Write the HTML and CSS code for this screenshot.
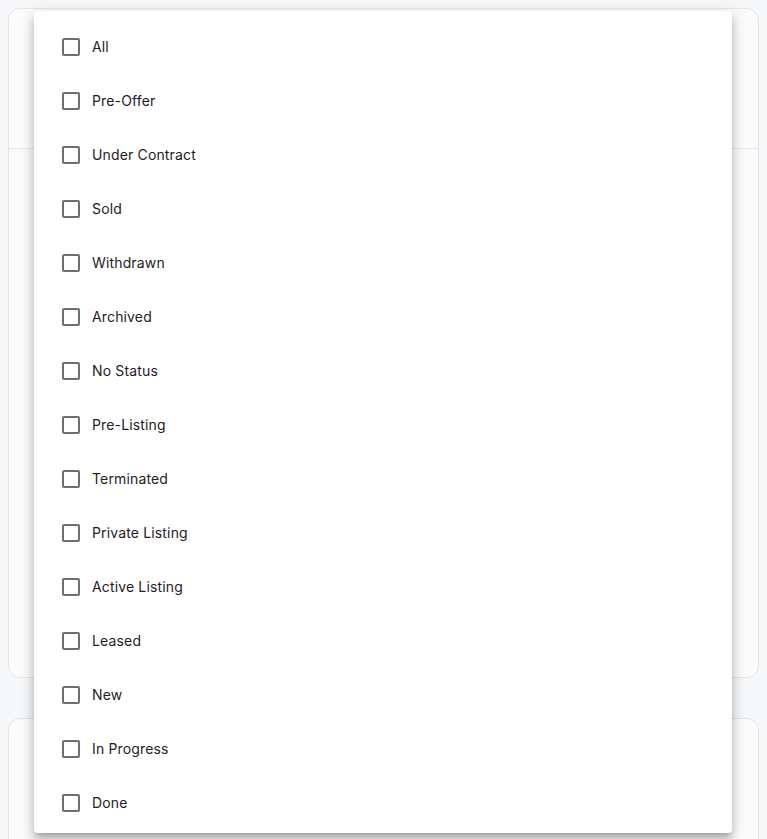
FILE: index.html
```html
<!DOCTYPE html>
<html lang="en">
<head>
<meta charset="utf-8">
<title>Status filter</title>
<link rel="stylesheet" href="styles.css">
</head>
<body>
<div class="page">
  <div class="card card-main">
    <div class="card-head"></div>
    <div class="card-body"></div>
  </div>
  <div class="card card-second"></div>
</div>
<ul class="menu">
  <li class="item"><span class="box"></span><span class="label">All</span></li>
  <li class="item"><span class="box"></span><span class="label">Pre-Offer</span></li>
  <li class="item"><span class="box"></span><span class="label">Under Contract</span></li>
  <li class="item"><span class="box"></span><span class="label">Sold</span></li>
  <li class="item"><span class="box"></span><span class="label">Withdrawn</span></li>
  <li class="item"><span class="box"></span><span class="label">Archived</span></li>
  <li class="item"><span class="box"></span><span class="label">No Status</span></li>
  <li class="item"><span class="box"></span><span class="label">Pre-Listing</span></li>
  <li class="item"><span class="box"></span><span class="label">Terminated</span></li>
  <li class="item"><span class="box"></span><span class="label">Private Listing</span></li>
  <li class="item"><span class="box"></span><span class="label">Active Listing</span></li>
  <li class="item"><span class="box"></span><span class="label">Leased</span></li>
  <li class="item"><span class="box"></span><span class="label">New</span></li>
  <li class="item"><span class="box"></span><span class="label">In Progress</span></li>
  <li class="item"><span class="box"></span><span class="label">Done</span></li>
</ul>
</body>
</html>
```
FILE: styles.css
```css
html, body {
  margin: 0;
  padding: 0;
  height: 100%;
  overflow: hidden;
}
body {
  background: #f6f7f9;
  font-family: Inter, "Noto Sans", "Liberation Sans", sans-serif;
}
.page {
  padding: 8px;
  display: flex;
  flex-direction: column;
  gap: 40px;
}
.card {
  background: #fbfbfc;
  border: 1px solid #e2e4ec;
  border-radius: 12px;
  box-sizing: border-box;
}
.card-main {
  height: 670px;
  display: flex;
  flex-direction: column;
}
.card-head {
  height: 139px;
  border-bottom: 1px solid #e2e4ec;
}
.card-second {
  height: 160px;
}
.menu {
  position: absolute;
  left: 34px;
  top: 11px;
  width: 698px;
  height: 822px;
  margin: 0;
  padding: 9px 0 0;
  list-style: none;
  background: #ffffff;
  border-radius: 4px;
  overflow: hidden;
  box-sizing: border-box;
  box-shadow: 0 5px 5px -3px rgba(0,0,0,0.2), 0 8px 10px 1px rgba(0,0,0,0.14), 0 3px 14px 2px rgba(0,0,0,0.12);
}
.item {
  height: 54px;
  display: flex;
  align-items: center;
  padding-left: 28px;
}
.box {
  width: 14px;
  height: 14px;
  border: 2px solid #6f6f6f;
  border-radius: 2px;
  flex: none;
}
.label {
  margin-left: 12px;
  font-size: 14px;
  color: #1f2024;
  line-height: 20px;
  letter-spacing: 0.15px;
}
```
